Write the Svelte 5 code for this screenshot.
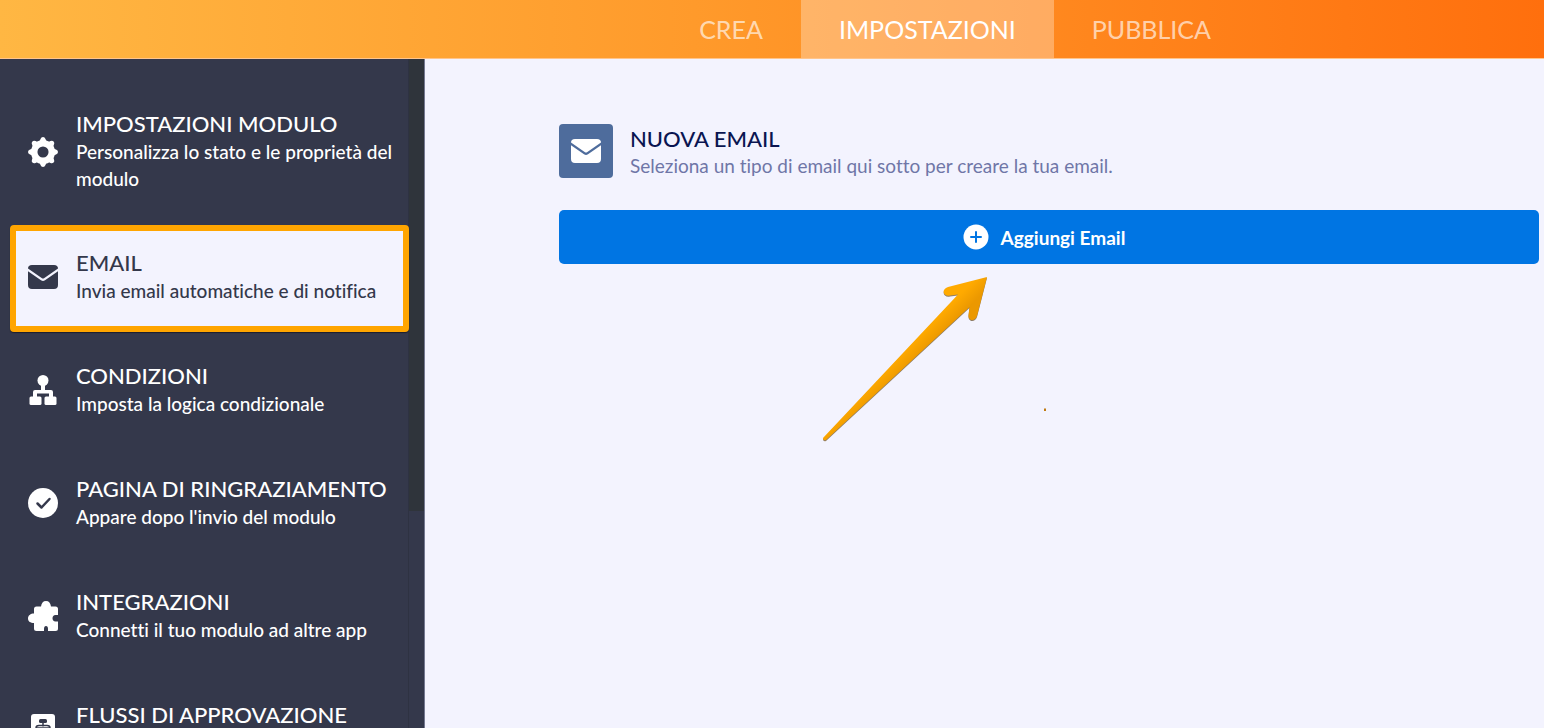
<script lang="ts">
	type Icon = 'gear' | 'mail' | 'sitemap' | 'check' | 'puzzle' | 'flow';

	interface MenuItem {
		icon: Icon;
		title: string;
		description: string;
	}

	const tabs = ['CREA', 'IMPOSTAZIONI', 'PUBBLICA'];

	const items: MenuItem[] = [
		{
			icon: 'gear',
			title: 'IMPOSTAZIONI MODULO',
			description: 'Personalizza lo stato e le proprietà del modulo'
		},
		{ icon: 'mail', title: 'EMAIL', description: 'Invia email automatiche e di notifica' },
		{ icon: 'sitemap', title: 'CONDIZIONI', description: 'Imposta la logica condizionale' },
		{
			icon: 'check',
			title: 'PAGINA DI RINGRAZIAMENTO',
			description: "Appare dopo l'invio del modulo"
		},
		{ icon: 'puzzle', title: 'INTEGRAZIONI', description: 'Connetti il tuo modulo ad altre app' },
		{ icon: 'flow', title: 'FLUSSI DI APPROVAZIONE', description: '' }
	];

	let activeTab = $state('IMPOSTAZIONI');
	let activeItem = $state('EMAIL');
</script>

{#snippet mailShape()}
	<path d="M0 6.500Q0 3 4 3h22q4 0 4 3.500L16 16.200q-1 .7-2 0Z" />
	<path d="M0 9.300l13 9q2 1.400 4 0l13-9V23q0 4-4 4H4q-4 0-4-4Z" />
{/snippet}

{#snippet menuIcon(name: Icon)}
	<svg class="menu__icon" viewBox="0 0 30 30" aria-hidden="true">
		{#if name === 'gear'}
			{#each [0, 45, 90, 135, 180, 225, 270, 315] as angle}
				<path
					d="M10 5.500Q12 4.500 12.500 2Q13.200 0 15 0T17.500 2Q18 4.500 20 5.500Z"
					transform={`rotate(${angle} 15 15)`}
				/>
			{/each}
			<circle cx="15" cy="15" r="8.800" fill="none" stroke="currentColor" stroke-width="6.500" />
		{:else if name === 'mail'}
			{@render mailShape()}
		{:else if name === 'sitemap'}
			<circle cx="15" cy="5.500" r="5.500" />
			<path d="M13 9h4v6h6q2 0 2 2v5h-4v-3.500H9V22H5v-5q0-2 2-2h6Z" />
			<rect x="1.500" y="21.500" width="12" height="8.500" rx="1.500" />
			<rect x="16.500" y="21.500" width="12" height="8.500" rx="1.500" />
		{:else if name === 'check'}
			<circle cx="15" cy="15" r="15" />
			<path class="menu__cut" d="M9.500 15.500l4 4 8-8.500" stroke-width="2.500" />
		{:else if name === 'puzzle'}
			<path
				d="M6 8q0-2.500 2.500-2.500H13C13.500 2 15 0 18 0s4.500 2 5 5.500h4.500Q30 5.500 30 8v6h-2.500q-3 .3-3 3.300t3 3.200H30v7q0 2.500-2.500 2.500H20v-2q0-3-2-3t-2 3v2H8.500Q6 30 6 27.500V22C2.500 22 0 20.500 0 17.500S2.500 12.500 6 12.500Z"
			/>
		{:else}
			<rect x="3" width="24" height="30" rx="3" />
			<rect class="menu__hole" x="11" y="5" width="8" height="4" rx="1.500" />
			<path class="menu__cut" d="M15 9v3M8 14q0-2.500 3-2.500h8q3 0 3 2.500M9 14h12" stroke-width="1.500" />
		{/if}
	</svg>
{/snippet}

<div class="builder">
	<header class="topbar">
		<nav class="topbar__tabs">
			{#each tabs as tab}
				<button
					type="button"
					class={['topbar__tab', tab === activeTab && 'topbar__tab--active']}
					onclick={() => (activeTab = tab)}
				>
					{tab}
				</button>
			{/each}
		</nav>
	</header>

	<div class="workspace">
		<aside class="sidebar">
			<nav class="menu">
				{#each items as item}
					<button
						type="button"
						class={['menu__item', item.title === activeItem && 'menu__item--active']}
						onclick={() => (activeItem = item.title)}
					>
						{@render menuIcon(item.icon)}
						<span class="menu__copy">
							<span class="menu__title">{item.title}</span>
							<span class="menu__description">{item.description}</span>
						</span>
					</button>
				{/each}
			</nav>
			<div class="sidebar__track" aria-hidden="true">
				<div class="sidebar__thumb"></div>
			</div>
		</aside>

		<main class="content">
			<div class="heading">
				<span class="heading__badge">
					<svg viewBox="0 0 30 30" aria-hidden="true">{@render mailShape()}</svg>
				</span>
				<div class="heading__copy">
					<h1 class="heading__title">NUOVA EMAIL</h1>
					<p class="heading__text">Seleziona un tipo di email qui sotto per creare la tua email.</p>
				</div>
			</div>

			<div class="action">
				<button type="button" class="add-button">
					<svg viewBox="0 0 26 26" aria-hidden="true">
						<circle cx="13" cy="13" r="12.500" fill="#fff" />
						<path d="M13 8v10M8 13h10" stroke="#0075e3" stroke-width="2" stroke-linecap="round" />
					</svg>
					Aggiungi Email
				</button>

				<svg class="pointer" viewBox="0 0 230 170" aria-hidden="true">
					<defs>
						<linearGradient
							id="pointer-fill"
							gradientUnits="userSpaceOnUse"
							x1="128"
							y1="20"
							x2="150"
							y2="42"
						>
							<stop offset="0.300" stop-color="#ffaa00" />
							<stop offset="0.800" stop-color="#eb9800" />
						</linearGradient>
					</defs>
					<path
						class="pointer__arrow"
						d="M167 4L128 14C121 16 123 24 130 22.500L138 21.500L3 165Q3 168 6 167L149.500 34L148.500 42C148 48 155 49 157 43Z"
						fill="url(#pointer-fill)"
					/>
					<path d="M224 135.500h2v2.500h-2Z" fill="#c07a10" />
				</svg>
			</div>
		</main>
	</div>
</div>

<style>
	:global(body) {
		margin: 0;
	}

	.builder {
		background: #f3f3fe;
		display: flex;
		flex-direction: column;
		font-family: Lato, 'Liberation Sans', sans-serif;
		font-variant-ligatures: none;
		height: 100vh;
		overflow: hidden;
	}

	button {
		border: 0;
		cursor: pointer;
		font-family: inherit;
		font-variant-ligatures: inherit;
		margin: 0;
	}

	.topbar {
		background: linear-gradient(to right, #ffb743, #ff9a2b 45%, #ff6f0d);
		border-bottom: 1px solid #ffc58c;
		display: flex;
		flex: none;
		justify-content: flex-end;
		padding-right: 295px;
	}

	.topbar__tabs {
		display: flex;
	}

	.topbar__tab {
		background: transparent;
		color: rgb(255 255 255 / 65%);
		font-size: 25px;
		line-height: 58px;
		padding: 0 38px;
	}

	.topbar__tab--active {
		background: rgb(255 255 255 / 30%);
		color: #fff;
	}

	.workspace {
		display: flex;
		flex: 1;
		min-height: 0;
	}

	.sidebar {
		background: #34384b;
		border-right: 1px solid #747890;
		box-sizing: border-box;
		display: flex;
		flex: none;
		overflow: hidden;
		width: 425px;
	}

	.sidebar__track {
		border-left: 1px solid #2e3242;
		box-sizing: border-box;
		width: 16px;
	}

	.sidebar__thumb {
		background: #2f343b;
		height: 452px;
	}

	.menu {
		flex: 1;
		padding-top: 22px;
	}

	.menu__item {
		align-items: center;
		background: transparent;
		box-sizing: border-box;
		color: #fff;
		display: flex;
		gap: 18px;
		padding: 30px 8px 29px 28px;
		text-align: left;
		width: 100%;
	}

	.menu__item--active {
		background: #f3f3fe;
		border: 6px solid #ffa500;
		border-radius: 4px;
		box-shadow: 0 1px 1px #1c1f2e;
		color: #34384b;
		margin: 4px 0 1px 10px;
		padding: 19px 2px 22px 12px;
		position: relative;
		width: calc(100% - 9px);
		z-index: 1;
	}

	.menu__icon {
		fill: currentColor;
		flex: none;
		height: 30px;
		width: 30px;
	}

	.menu__cut {
		fill: none;
		stroke: #34384b;
		stroke-linecap: round;
		stroke-linejoin: round;
	}

	.menu__hole {
		fill: #34384b;
	}

	.menu__title,
	.menu__description {
		display: block;
	}

	.menu__title {
		font-size: 22px;
		font-weight: 500;
		line-height: 25px;
		margin-bottom: 2px;
	}

	.menu__description {
		font-size: 19px;
		font-weight: 500;
		line-height: 27px;
		min-height: 27px;
	}

	.content {
		flex: 1;
		padding: 65px 5px 0 134px;
	}

	.heading {
		align-items: center;
		display: flex;
		gap: 17px;
		height: 54px;
	}

	.heading__badge {
		align-items: center;
		background: #4e6c9c;
		border-radius: 4px;
		display: flex;
		flex: none;
		height: 54px;
		justify-content: center;
		width: 54px;
	}

	.heading__badge svg {
		fill: #fff;
		height: 30px;
		width: 30px;
	}

	.heading__copy {
		padding-top: 2px;
	}

	.heading__title,
	.heading__text {
		line-height: 27px;
		margin: 0;
	}

	.heading__title {
		color: #0a1551;
		font-size: 22px;
		font-weight: 500;
	}

	.heading__text {
		color: #6f76a7;
		font-size: 19px;
	}

	.action {
		margin-top: 32px;
		position: relative;
	}

	.add-button {
		align-items: center;
		background: #0075e3;
		border-radius: 5px;
		color: #fff;
		display: flex;
		font-size: 19px;
		font-weight: 700;
		gap: 12px;
		height: 54px;
		justify-content: center;
		padding: 0 10px 0 0;
		width: 100%;
	}

	.add-button svg {
		height: 26px;
		width: 26px;
	}

	.pointer {
		height: 170px;
		left: calc(50% - 229px);
		pointer-events: none;
		position: absolute;
		top: 63px;
		width: 230px;
	}

	.pointer__arrow {
		filter: drop-shadow(0 1px 0 #8f7d65);
	}
</style>
